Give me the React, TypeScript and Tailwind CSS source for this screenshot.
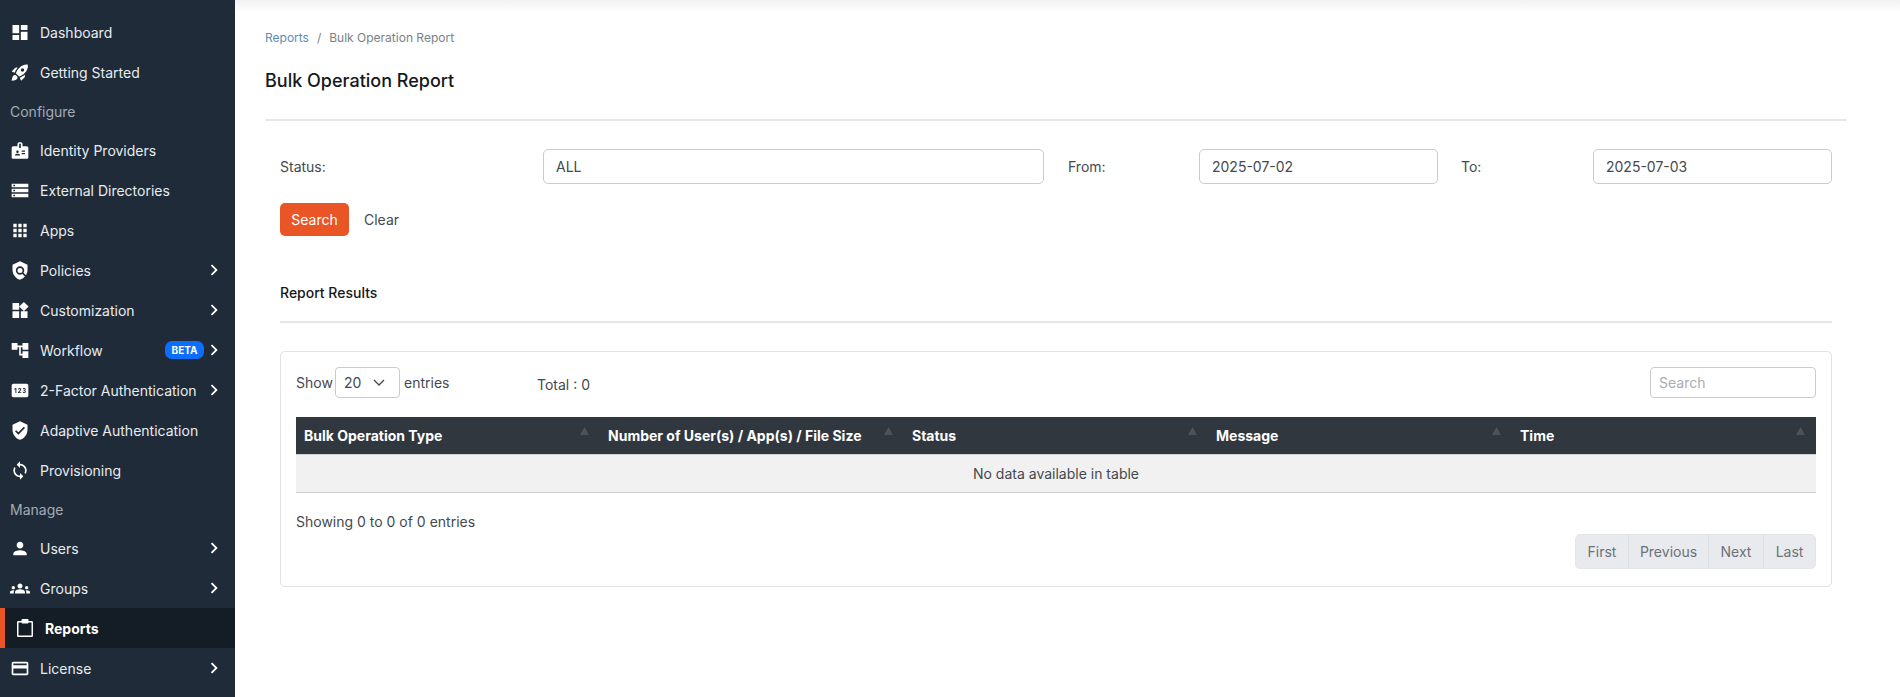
import type { ReactNode } from 'react';
import {
  MdDashboard,
  MdRocketLaunch,
  MdBadge,
  MdStorage,
  MdApps,
  MdPolicy,
  MdWidgets,
  MdAccountTree,
  MdPin,
  MdVerifiedUser,
  MdSync,
  MdPerson,
  MdGroups,
  MdOutlineCreditCard,
  MdChevronRight,
} from 'react-icons/md';

function NavItem({ icon, label, chevron, beta }: { icon: ReactNode; label: string; chevron?: boolean; beta?: boolean }) {
  return (
    <div className="flex h-10 items-center pl-[10px] pr-[10px] text-[14px] text-[#e8ecf0]">
      <span className="flex w-[20px] justify-center text-[21px] text-white">{icon}</span>
      <span className="ml-[10px]">{label}</span>
      <span className="flex-1" />
      {beta && (
        <span className="mr-[-1px] flex h-[18px] w-[39px] items-center justify-center rounded-[7px] bg-[#0d6efd] text-[10px] font-bold text-white">
          BETA
        </span>
      )}
      {chevron && <MdChevronRight className="text-[22px] text-white" />}
    </div>
  );
}

function SectionLabel({ children }: { children: string }) {
  return <div className="flex h-[38px] items-center pl-[10px] text-[14px] text-[#a3abb5]">{children}</div>;
}

function Sidebar() {
  return (
    <aside className="h-full w-[235px] shrink-0 bg-[#1f2b38] pt-[12px]">
      <NavItem icon={<MdDashboard />} label="Dashboard" />
      <NavItem icon={<MdRocketLaunch />} label="Getting Started" />
      <SectionLabel>Configure</SectionLabel>
      <NavItem icon={<MdBadge />} label="Identity Providers" />
      <NavItem icon={<MdStorage />} label="External Directories" />
      <NavItem icon={<MdApps />} label="Apps" />
      <NavItem icon={<MdPolicy />} label="Policies" chevron />
      <NavItem icon={<MdWidgets />} label="Customization" chevron />
      <NavItem icon={<MdAccountTree />} label="Workflow" chevron beta />
      <NavItem icon={<MdPin />} label="2-Factor Authentication" chevron />
      <NavItem icon={<MdVerifiedUser />} label="Adaptive Authentication" />
      <NavItem icon={<MdSync />} label="Provisioning" />
      <SectionLabel>Manage</SectionLabel>
      <NavItem icon={<MdPerson />} label="Users" chevron />
      <NavItem icon={<MdGroups />} label="Groups" chevron />
      <div className="flex h-10 items-center border-l-[5px] border-[#e95525] bg-[#141c26] pl-[12px] text-[14px] font-bold text-white">
        <svg width="16" height="18" viewBox="0 0 16 18" className="shrink-0">
          <rect x="0.75" y="2.75" width="14.5" height="14.5" fill="none" stroke="#fff" strokeWidth="1.5" rx="0.5" />
          <rect x="4.5" y="0" width="7" height="4.5" rx="1" fill="#fff" />
        </svg>
        <span className="ml-[12px]">Reports</span>
      </div>
      <NavItem icon={<MdOutlineCreditCard />} label="License" chevron />
    </aside>
  );
}

function Field({ value, className }: { value: string; className: string }) {
  return (
    <div className={`flex h-[35px] items-center rounded-[5px] border border-[#c9cbce] bg-white pl-[12px] text-[14px] text-[#45494e] ${className}`}>
      {value}
    </div>
  );
}

const columns = ['Bulk Operation Type', 'Number of User(s) / App(s) / File Size', 'Status', 'Message', 'Time'];

function ResultsCard() {
  return (
    <div className="mt-[28px] rounded-[5px] border border-[#dfe1e4] px-[15px] pb-[17px] pt-[15px] text-[14px] text-[#45494e]">
      <div className="flex h-[31px] items-center">
        <span className="w-[35px]">Show</span>
        <div className="ml-[4px] flex h-[31px] w-[65px] items-center justify-between rounded-[4px] border border-[#c9cbce] pl-[8px] pr-[14px] text-[#45494e]">
          20
          <svg width="12" height="7" viewBox="0 0 12 7" fill="none" stroke="#45494e" strokeWidth="1.3">
            <path d="M1 1l5 5 5-5" />
          </svg>
        </div>
        <span className="ml-[4px] w-[46px]">entries</span>
        <span className="ml-[87px] mt-[4px]">Total : 0</span>
        <div className="ml-auto flex h-[31px] w-[166px] items-center rounded-[4px] border border-[#c9cbce] pl-[8px] text-[#a9adb3]">
          Search
        </div>
      </div>
      <table className="mt-[19px] w-full table-fixed border-collapse">
        <thead>
          <tr className="h-[37px] bg-[#30373f] text-white">
            {columns.map((column) => (
              <th key={column} className="relative pl-[8px] text-left text-[14px] font-bold">
                {column}
                <svg className="absolute right-[11px] top-[10px]" width="9" height="8" viewBox="0 0 9 8">
                  <path d="M4.5 0 9 8H0z" fill="#4b535c" />
                </svg>
              </th>
            ))}
          </tr>
        </thead>
        <tbody>
          <tr className="h-[38px] border-b border-t border-[#cfd1d4] bg-[#f1f1f1]">
            <td colSpan={5} className="text-center">
              No data available in table
            </td>
          </tr>
        </tbody>
      </table>
      <div className="mt-[18px] h-[22px] leading-[22px]">Showing 0 to 0 of 0 entries</div>
      <div className="mt-[1px] flex justify-end">
        <div className="flex h-[35px] overflow-hidden rounded-[5px] border border-[#e2e5e9] bg-[#e8eaed] text-[#6c7278]">
          <span className="flex w-[53px] items-center justify-center border-r border-[#dcdfe3]">First</span>
          <span className="flex w-[80px] items-center justify-center border-r border-[#dcdfe3]">Previous</span>
          <span className="flex w-[55px] items-center justify-center border-r border-[#dcdfe3]">Next</span>
          <span className="flex w-[51px] items-center justify-center">Last</span>
        </div>
      </div>
    </div>
  );
}

export default function App() {
  return (
    <div className="flex h-screen overflow-hidden bg-white font-['Inter',sans-serif]">
      <Sidebar />
      <main className="min-w-0 flex-1">
        <div className="h-[12px] bg-gradient-to-b from-[#f1f1f1] to-white" />
        <div className="pl-[30px] pr-[53px]">
          <div className="mt-[18px] flex h-[16px] items-center text-[12px] text-[#7b8186]">
            <span className="text-[#5b8db8]">Reports</span>
            <span className="mx-[8px]">/</span>
            <span>Bulk Operation Report</span>
          </div>
          <h1 className="mt-[23px] h-[24px] text-[18px] font-medium leading-[24px] text-[#16181b]">Bulk Operation Report</h1>
          <hr className="mt-[26px] border-t-2 border-[#e6e7e9]" />
          <div className="px-[15px]">
            <div className="mt-[28px] flex items-center text-[14px] text-[#45494e]">
              <label className="w-[263px]">Status:</label>
              <Field value="ALL" className="w-[501px]" />
              <label className="ml-[24px] w-[131px]">From:</label>
              <Field value="2025-07-02" className="w-[239px]" />
              <label className="ml-[23px] w-[132px]">To:</label>
              <Field value="2025-07-03" className="w-[239px]" />
            </div>
            <div className="mt-[19px] flex items-center text-[14px]">
              <button className="h-[33px] w-[69px] rounded-[5px] bg-[#e95525] text-white">Search</button>
              <span className="ml-[15px] text-[#45494e]">Clear</span>
            </div>
            <div className="mt-[47px] h-[20px] text-[14px] font-medium leading-[20px] text-[#16181b]">Report Results</div>
            <hr className="mt-[18px] border-t-2 border-[#e6e7e9]" />
            <ResultsCard />
          </div>
        </div>
      </main>
    </div>
  );
}
